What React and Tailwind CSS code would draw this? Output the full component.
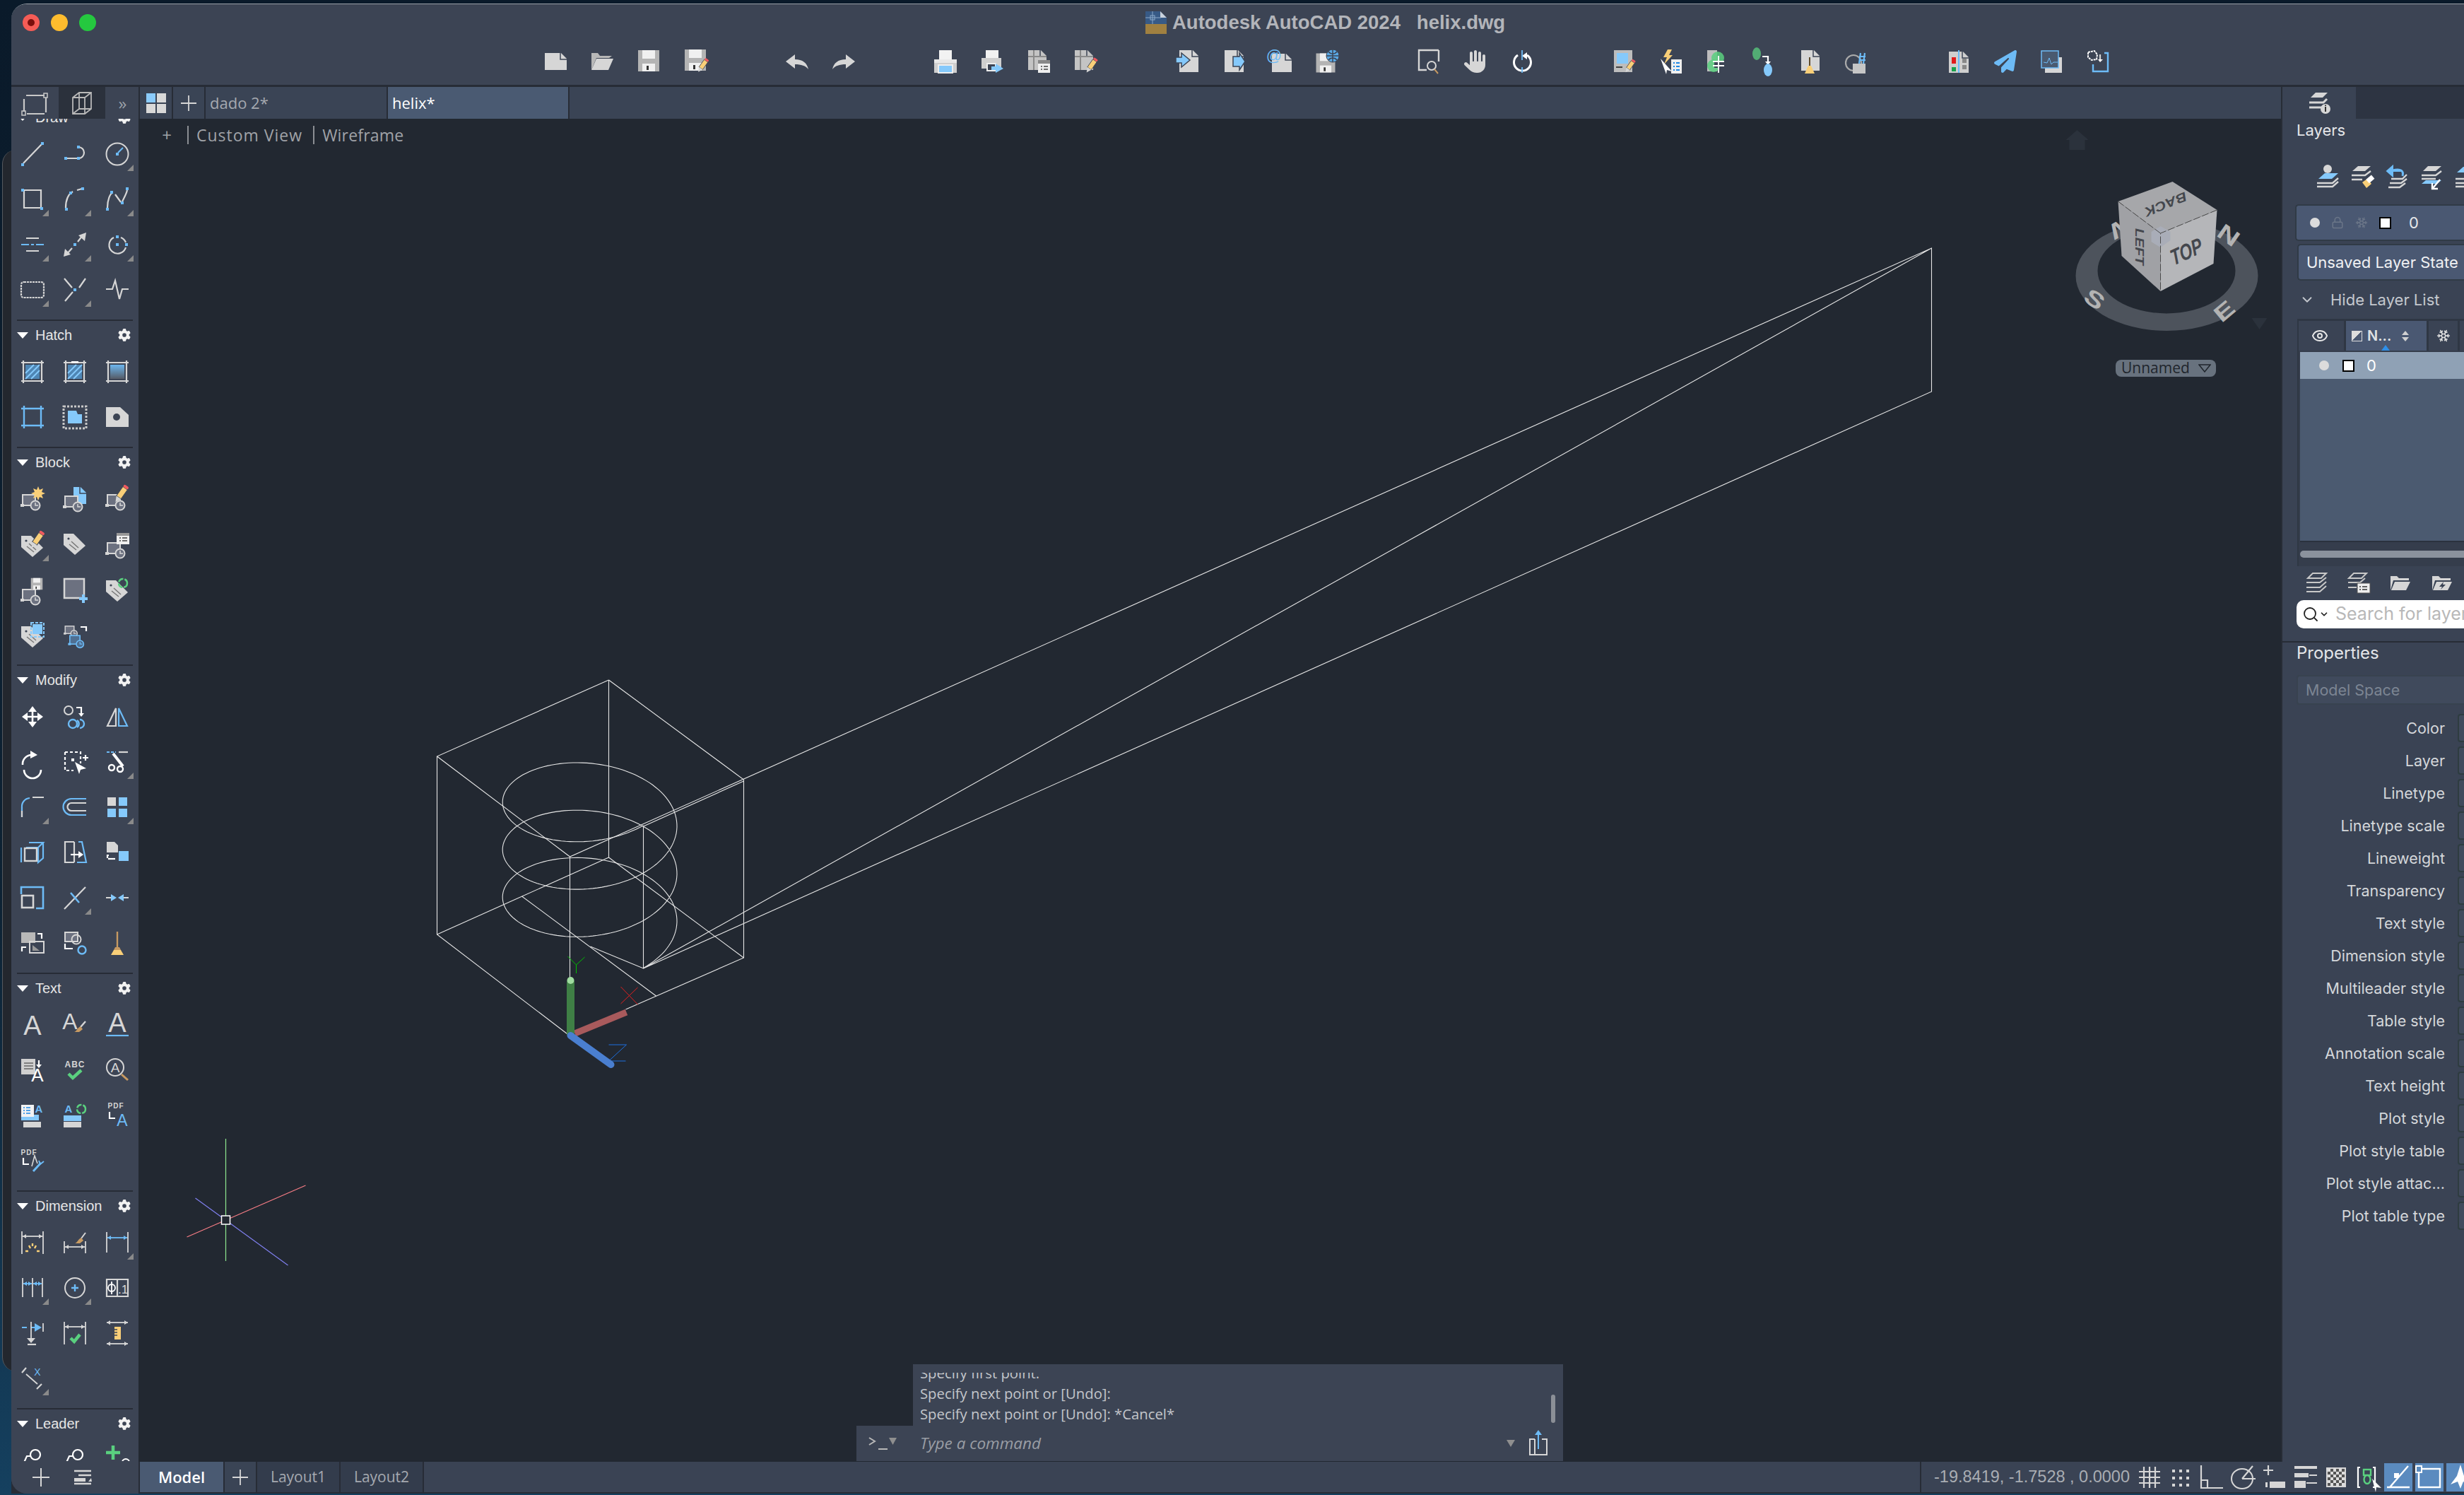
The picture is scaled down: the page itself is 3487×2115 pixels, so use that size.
import React from "react";
import { ChevronDown, Eye, Lock, Snowflake, Search } from "lucide-react";
import { FaGear, FaHand, FaPaperPlane } from "react-icons/fa6";

const G = "#d6d6d6";
const B = "#6dbbf6";
const L = "#85c9fb";
const Y = "#f9cf78";
const R = "#ef5a5f";
const W = "#ffffff";
const N = "#5ad07f";
const D = "#3c4454";
const T = "#c79a62";

const P = ({ d, c = G, w = 2.2, f = "none", ...r }) => (
  <path d={d} stroke={c} strokeWidth={w} fill={f} {...r} />
);
const Q = ({ x, y, s = 4, c = B }) => (
  <rect x={x - s / 2} y={y - s / 2} width={s} height={s} fill={c} />
);
const F = ({ d, c = G }) => <path d={d} fill={c} />;

const Doc = ({ x, y, w, h, c = G }) => (
  <g>
    <path d={`M${x},${y}H${x + w - 8}L${x + w},${y + 8}V${y + h}H${x}Z`} fill={c} />
    <path d={`M${x + w - 9},${y}V${y + 9}H${x + w}`} stroke={D} strokeWidth="1.5" fill="none" />
  </g>
);
const Floppy = ({ x = 0, y = 0, s = 1 }) => (
  <g transform={`translate(${x} ${y}) scale(${s})`}>
    <rect x="-15" y="-15" width="30" height="30" fill="#b4b4b4" />
    <rect x="-9" y="-15" width="18" height="12" fill="#f0f0f0" />
    <rect x="-9" y="4" width="18" height="11" fill="#f0f0f0" />
    <rect x="-3" y="7" width="3" height="6" fill="#333" />
  </g>
);
const Pencil = ({ x = 0, y = 0, s = 1 }) => (
  <g transform={`translate(${x} ${y}) rotate(35) scale(${s})`}>
    <rect x="-4" y="-9" width="8" height="16" fill={Y} stroke={D} strokeWidth="1" />
    <rect x="-4" y="-13" width="8" height="4" rx="2" fill={R} />
    <path d="M-4,7H4L0,15Z" fill={G} />
  </g>
);
const Blk = ({ x = 0, y = 0, s = 1, c = G, fill = "#6c7180" }) => (
  <g transform={`translate(${x} ${y}) scale(${s})`}>
    <rect x="-14" y="-6" width="18" height="15" fill={fill} stroke={c} strokeWidth="2" />
    <rect x="-17" y="7" width="5" height="4" fill={c} />
    <circle cx="4" cy="9" r="6.5" fill={fill} stroke={c} strokeWidth="2" />
    <path d="M4,5V9H8" stroke={c} strokeWidth="1.5" fill="none" />
  </g>
);
const Tag = ({ x = 0, y = 0, s = 1 }) => (
  <g transform={`translate(${x} ${y}) scale(${s})`}>
    <path d="M-16,-15H-2L15,2L0,15L-16,1Z" fill={G} />
    <circle cx="-9" cy="-8" r="1.6" fill={D} />
    <path d="M-5,-4L5,5M-8,0L2,8" stroke="#777" strokeWidth="1.5" />
  </g>
);
const HatchFrame = ({ c = G }) => <P c={c} d="M-16,-13H16M-16,13H16M-13,-16V16M13,-16V16" />;
const Hatches = () => (
  <g>
    <rect x="-10" y="-10" width="20" height="20" fill="#4f86b4" />
    <P c={L} w="2" d="M-10,2L2,-10M-10,10L10,-10M-2,10L10,-2" />
  </g>
);

const draw = [
  { i: <><P d="M-13,13L13,-14" /><Q x={-14} y={15} /><Q x={14} y={-15} /></> },
  { i: <><P d="M-13,6H5M5,-10A8,8 0 0 1 5,6" /><Q x={-13} y={6} /><Q x={5} y={6} /><Q x={5} y={-10} /></> },
  { i: <><circle r="15.5" fill="none" stroke={G} strokeWidth="2" /><Q x={0} y={0} /><P c={B} d="M1,-2L8,-9" /></>, f: 1 },
  { i: <><P d="M-12,-13H12V12H-12Z" /><Q x={-14} y={-13} /><Q x={13} y={13} /></>, f: 1 },
  { i: <><P d="M-13,12C-13,-2 -8,-8 -3,-11M3,-13L10,-15" /><Q x={-12} y={14} /><Q x={-6} y={-9} /><Q x={11} y={-15} /></>, f: 1 },
  { i: <><P d="M-14,12C-14,0 -10,-8 -7,-9M-3,-7L5,4M7,3C10,-3 13,-8 14,-13" /><Q x={-14} y={14} /><Q x={-8} y={-10} /><Q x={7} y={5} /><Q x={14} y={-15} /></>, f: 1 },
  { i: <><P d="M-9,-9H9M-9,9H9" /><P c={B} d="M-16,0H-5M-2,0H2M5,0H16" /></>, f: 1 },
  { i: <><P d="M-12,14L-4,5M4,-4L11,-13" /><F d="M-16,17L-14,6L-6,14Z" /><F d="M16,-17L14,-5L5,-13Z" /><Q x={0} y={0} /></>, f: 1 },
  { i: <><P d="M-5,-10A12,12 0 1 0 12,4M12,-3A12,12 0 0 0 5,-10" /><Q x={0} y={0} /><Q x={0} y={-11} /><Q x={13} y={0} /></>, f: 1 },
  { i: <><P strokeDasharray="3 1" d="M-12,-11H12Q16,-11 16,-7V7Q16,11 12,11H-12Q-16,11 -16,7V-7Q-16,-11 -12,-11Z" /></>, f: 1 },
  { i: <><P d="M-15,-16L-4,-3M15,-16L6,-3M-3,3L-14,16" /><Q x={0} y={0} /></>, f: 1 },
  { i: <><P d="M-16,-1H-7L-3,-13L3,13L7,-1H16" /></> },
];
const hatch = [
  { i: <><Hatches /><HatchFrame /></> },
  { i: <><Hatches /><HatchFrame /><rect x="-5" y="-15" width="10" height="3" fill={W} /></> },
  { i: <><rect x="-10" y="-10" width="20" height="20" fill="url(#gr)" /><HatchFrame /></> },
  { i: <><P c={B} w="2.4" d="M-16,-12H16M-16,12H16M-12,-16V16M12,-16V16" /></> },
  { i: <><rect x="-16" y="-15" width="32" height="31" fill="none" stroke="#c8c8c8" strokeWidth="3" strokeDasharray="3 2" /><path d="M-10,-9H2L4,-4H10V9H-10Z" fill={L} /></> },
  { i: <><path d="M-16,-14H4L16,-3V14H-16Z" fill={G} /><circle cx="-1" cy="0" r="5" fill={D} /></> },
];
const block = [
  { i: <><Blk /><path d="M8,-18L10,-13L15,-15L13,-10L18,-8L13,-6L15,-1L10,-3L8,2L6,-3L1,-1L3,-6L-2,-8L3,-10L1,-15L6,-13Z" fill={Y} /></> },
  { i: <><Doc x={-2} y={-17} w={18} h={24} c={L} /><Blk y={2} /></> },
  { i: <><Blk /><Pencil x={6} y={-8} /></> },
  { i: <><Tag y={3} /><Pencil x={7} y={-7} /></>, f: 1 },
  { i: <Tag /> },
  { i: <><Blk y={4} /><rect x="-1" y="-16" width="18" height="16" fill="#efefef" /><rect x="-1" y="-16" width="18" height="4" fill="#999" /><P c="#444" w="1.5" d="M3,-9H5M7,-9H14M3,-5H5M7,-5H14" /></> },
  { i: <><Blk y={6} /><Floppy x={6} y={-8} s={0.55} /></> },
  { i: <><rect x="-15" y="-15" width="28" height="27" fill="#6c7180" stroke={G} strokeWidth="2.5" /><P c={L} w="4" d="M6,13H18M12,7V19" /></> },
  { i: <><Tag y={2} /><circle cx="8" cy="-9" r="6" fill="none" stroke={N} strokeWidth="2.5" strokeDasharray="8 2" /></> },
  { i: <><Tag y={3} /><rect x="0" y="-15" width="14" height="14" fill={L} /><P c={L} w="2" d="M-2,-17H16V3H-2Z" strokeDasharray="4 2" /></> },
  { i: <><Blk x={-4} y={-8} s={0.7} /><P c={W} d="M8,-11H16V-5" /><Blk x={4} y={6} s={0.8} c={B} fill="#4f6f92" /></> },
  { i: null },
];
const modify = [
  { i: <><P c={W} w="2.6" d="M-13,0H13M0,-13V13" /><F c={W} d="M-15,0L-7,-6V6ZM15,0L7,-6V6ZM0,-15L-6,-7H6ZM0,15L-6,7H6Z" /></> },
  { i: <><circle cx="-9" cy="-9" r="6" fill="none" stroke={G} strokeWidth="2" /><P c={W} d="M2,-13H9V-3" /><F c={W} d="M5,-5H13L9,0Z" /><circle cx="-3" cy="10" r="6" fill="none" stroke={B} strokeWidth="2.4" /><path d="M7,4A6,6 0 0 1 7,16M3,5A6,6 0 0 1 3,15" fill="none" stroke={B} strokeWidth="2.4" /></> },
  { i: <><P d="M-2,-12V13H-14Z" /><P c={B} d="M2,-12V13H14Z" /></> },
  { i: <><P c={W} w="2.6" d="M-12,11A12,12 0 0 0 12,11M-14,4A13,13 0 0 1 -2,-10" /><F c={W} d="M-3,-16L7,-10L-3,-5Z" /></> },
  { i: <><P c={W} strokeDasharray="4 3" d="M-14,-14H8V2M-14,-14V12H-2" /><Q c={W} x={-3} y={-3} /><F c={W} d="M0,0L16,9L8,11L6,17Z" /><P c={W} d="M11,-6H19M15,-10V-2" /></> },
  { i: <><P c={B} d="M-15,-14H-2" strokeDasharray="4 2" /><P d="M2,-14H15" /><P c={W} w="4" d="M-6,-12L8,6" /><circle cx="-8" cy="8" r="4" fill="none" stroke={W} strokeWidth="2.4" /><circle cx="4" cy="10" r="4" fill="none" stroke={W} strokeWidth="2.4" /></>, f: 1 },
  { i: <><P c={B} d="M-15,14V0A12,12 0 0 1 -4,-13" /><P d="M0,-14H16M-15,5V14" /></>, f: 1 },
  { i: <><P c={B} d="M16,-12H-5A10,10 0 0 0 -5,11H16" /><P d="M16,-6H-5A5,5 0 0 0 -5,5H16" /></> },
  { i: <><rect x="-14" y="-14" width="12" height="12" fill={G} /><rect x="2" y="-14" width="12" height="12" fill={L} /><rect x="-14" y="2" width="12" height="12" fill={L} /><rect x="2" y="2" width="12" height="12" fill={L} /></>, f: 1 },
  { i: <><P c={B} d="M-16,-7V14M-5,-14H15L8,-7H-9M15,-14V8L8,14V-7" /><rect x="-11" y="-6" width="17" height="18" fill="none" stroke={G} strokeWidth="2.4" /></> },
  { i: <><P d="M-1,-15H-14V14H-1M-1,-15V14" /><P c={B} d="M5,-15H10L16,14H3" /><P c={W} d="M-6,3H8" /><F c={W} d="M5,-2L12,3L5,8Z" /></> },
  { i: <><path d="M-15,-15H-4L1,-10V0H-15Z" fill={G} /><P c={W} d="M-12,4H-14V8" /><P c={W} d="M-13,9H-3" /><rect x="2" y="-2" width="14" height="14" fill={L} /></> },
  { i: <><P c={B} w="2.6" d="M-16,-5V-15H15V15H5" /><rect x="-15" y="-3" width="16" height="17" fill="none" stroke={G} strokeWidth="2.6" /></> },
  { i: <><P d="M-15,16L15,-15" /><P c={B} w="2.6" d="M-6,-7L6,7" /></>, f: 1 },
  { i: <><P d="M-16,0H-9M9,0H16" /><F c={L} d="M-9,-5V5L-1,0Z" /><F c={L} d="M9,-5V5L1,0Z" /></> },
  { i: <><rect x="-16" y="-15" width="20" height="15" fill="#b8b8b8" /><rect x="-4" y="-2" width="20" height="16" fill="none" stroke={G} strokeWidth="2" /><path d="M0,11H10L0,3Z" fill="#999" /><P c={W} d="M7,-13H13V-6M-15,12V6H-9" /></> },
  { i: <><rect x="-14" y="-15" width="18" height="13" fill="#6c7180" stroke={G} strokeWidth="2" /><circle cx="2" cy="-5" r="6.5" fill="none" stroke={G} strokeWidth="2" /><P c={W} d="M-14,1V8H-3" /><circle cx="10" cy="10" r="5.5" fill="none" stroke={B} strokeWidth="2.4" /></> },
  { i: <><P c={T} w="2.4" d="M0,-16V6" /><F c={T} d="M-3,6H3L5,10H-5Z" /><F c={Y} d="M-5,10H5L9,17H-9Z" /></> },
];
const AText = ({ x = 0, y = 0, s = 36, c = G }) => (
  <text x={x} y={y} fontSize={s} textAnchor="middle" fontFamily="Liberation Sans, sans-serif" fill={c}>A</text>
);
const text = [
  { i: <AText y={14} s={38} /> },
  { i: <><AText x={-7} y={6} s={32} /><P c={G} w="2.4" d="M15,-5L8,3" /><F c={T} d="M8,2L11,6L6,10H-1C3,9 3,4 8,2Z" /></> },
  { i: <><AText y={10} s={38} /><P c={B} d="M-16,15H16" /></> },
  { i: <><rect x="-16" y="-16" width="20" height="22" fill="#d0d0d0" /><P c="#666" w="1.6" d="M-12,-10H1M-12,-6H1M-12,-2H1" /><P c={W} d="M9,-14V-7" /><F c={W} d="M5,-8H13L9,-3Z" /><AText c={W} x={7} y={16} s={26} /></> },
  { i: <><text y="-4" textAnchor="middle" fontSize="12" fontWeight="700" fontFamily="Liberation Sans, sans-serif" letterSpacing="1" fill={G}>ABC</text><P c={N} w="4.5" d="M-9,5L-3,11L9,0" /></> },
  { i: <><circle cx="-3" cy="-4" r="12" fill="none" stroke={G} strokeWidth="2" /><AText x={-3} y={3} s={19} /><P c={T} w="3" d="M6,6L15,14" /></> },
  { i: <><rect x="-16" y="-1" width="25" height="8" fill={L} /><rect x="-13" y="9" width="25" height="8" fill={G} /><rect x="-16" y="-15" width="18" height="17" fill="#f2f2f2" /><P c="#1e88e5" w="1.6" d="M-13,-11H-11M-9,-11H-3M-13,-7H-11M-9,-7H-3M-13,-3H-11M-9,-3H-3" /><text x="9" y="-4" fontSize="15" fontWeight="700" textAnchor="middle" fontFamily="Liberation Sans, sans-serif" fill={B}>A</text></> },
  { i: <><rect x="-16" y="0" width="25" height="8" fill={L} /><rect x="-16" y="9" width="25" height="8" fill={G} /><text x="-9" y="-4" fontSize="15" fontWeight="700" textAnchor="middle" fontFamily="Liberation Sans, sans-serif" fill={B}>A</text><circle cx="9" cy="-9" r="6" fill="none" stroke={N} strokeWidth="2.5" strokeDasharray="8 2" /></> },
  { i: <><text x="-2" y="-10" fontSize="10" fontWeight="700" textAnchor="middle" fontFamily="Liberation Sans, sans-serif" letterSpacing="1" fill={G}>PDF</text><P c={W} d="M-11,-5V4H-3" /><AText c={B} x={7} y={15} s={23} /></> },
  { i: <><text x="-5" y="-8" fontSize="10" fontWeight="700" textAnchor="middle" fontFamily="Liberation Sans, sans-serif" letterSpacing="1" fill={G}>PDF</text><P c={W} d="M-13,-4V5H-5" /><P c={G} w="1.6" d="M-1,8L3,-7L7,4" /><P c={B} w="3" d="M1,15L12,3" /><P c={B} w="2" d="M9,0L11,5L16,1" /></> },
  { i: null },
  { i: null },
];
const dimArrow = (y, x1, x2, c = G) => (
  <><P c={c} w="1.8" d={`M${x1},${y}H${x2}`} /><F c={c} d={`M${x1},${y}l5,-3v6ZM${x2},${y}l-5,-3v6Z`} /></>
);
const dim = [
  { i: <><P d="M-15,-16V16M15,-16V16" w="1.8" />{dimArrow(-9, -14, 14)}<P c={Y} w="2.4" d="M-5,4L-3,8M5,4L3,8M0,1V5M-10,12H-6M10,12H6" /></> },
  { i: <><P w="1.8" d="M-15,-2V15M15,-2V15" />{dimArrow(6, -14, 14)}<P w="2" d="M15,-14L9,-6" /><F c={T} d="M9,-7L12,-3L7,1H0C4,0 4,-5 9,-7Z" /></> },
  { i: <><P w="1.8" d="M-15,-15V14M15,-15V14" />{dimArrow(-7, -14, 14, B)}</>, f: 1 },
  { i: <><P w="1.8" d="M-14,-14V13M0,-14V13M14,-14V13" />{dimArrow(-6, -13, -1, B)}{dimArrow(-6, 1, 13, B)}</>, f: 1 },
  { i: <><circle r="14" fill="none" stroke={G} strokeWidth="2" /><P c={B} w="2.4" d="M-5,0H5M0,-5V5" /></>, f: 1 },
  { i: <><P d="M-15,-12H15V12H-15ZM0,-12V12" /><circle cx="-8" r="5" fill="none" stroke={W} strokeWidth="1.8" /><P c={W} w="1.8" d="M-8,-9V9" /><text x="8" y="8" fontSize="17" textAnchor="middle" fontFamily="Liberation Sans, sans-serif" fill={G}>.1</text></> },
  { i: <><P c={B} d="M-15,-8H-8M3,-8H-2" /><F c={B} d="M3,-14L13,-8L3,-2Z" /><P d="M-2,-16V7M15,-14V-2" w="1.8" /><F d="M-8,7H4L-2,14Z" /><P d="M-7,16H5" /></> },
  { i: <><P w="1.8" d="M-15,-16V16M15,-16V16" />{dimArrow(-9, -14, 14)}<P c={N} w="4.5" d="M-6,7L-1,12L7,2" /></> },
  { i: <>{dimArrow(-15, -15, 15)}{dimArrow(15, -15, 15)}<rect x="-4" y="-9" width="9" height="18" fill={Y} /><P c={D} w="1.4" d="M-4,-5H0M-4,-1H0M-4,3H0" /></> },
  { i: <><P d="M-15,-8L-9,-15M6,15L13,8" /><P w="1.8" d="M-9,-6L7,8" /><text x="7" y="-4" fontSize="14" fontFamily="Liberation Sans, sans-serif" textAnchor="middle" fill={B}>X</text></>, f: 1 },
  { i: null },
  { i: null },
];
const leader = [
  { i: <g transform="translate(0 -7)"><P c={W} d="M-12,10L-8,1H-2" /><circle cx="4" cy="-1" r="7" fill="none" stroke={W} strokeWidth="2.2" /></g> },
  { i: <g transform="translate(0 -7)"><P c={W} d="M-12,10L-8,1H-2" /><circle cx="4" cy="-1" r="7" fill="none" stroke={W} strokeWidth="2.2" /></g> },
  { i: <g transform="translate(0 -9)"><P c={N} w="4.5" d="M-6,-12V8M-16,-2H4" /><circle cx="12" cy="12" r="5" fill="none" stroke={W} strokeWidth="2" /><circle cx="0" cy="14" r="3" fill="none" stroke={W} strokeWidth="2" /></g> },
];

const sections = [
  { title: "Draw", icons: draw },
  { title: "Hatch", icons: hatch },
  { title: "Block", icons: block },
  { title: "Modify", icons: modify },
  { title: "Text", icons: text },
  { title: "Dimension", icons: dim },
  { title: "Leader", icons: leader },
];

const topIcons = [
  [
    <Doc x={-15} y={-12} w={31} h={24} />,
    <><path d="M-15,-12H-6L-3,-8H14L10,-5H-8L-15,12Z" fill="#b8b8b8" /><path d="M-8,-4H16L9,12H-15Z" fill={G} /></>,
    <Floppy y={-1} />,
    <><Floppy y={-2} /><Pencil x={11} y={5} s={0.8} /></>,
  ],
  [
    <path d="M-16,0L-3,-10V-3C8,-3 14,2 16,11C12,6 6,4 -3,4V10Z" fill={G} />,
    <path d="M16,0L3,-10V-3C-8,-3 -14,2 -16,11C-12,6 -6,4 3,4V10Z" fill={G} />,
  ],
  [
    <><rect x="-9" y="-16" width="18" height="13" fill="#f2f2f2" /><rect x="-16" y="-3" width="32" height="19" fill="#cfcfcf" /><rect x="-16" y="-3" width="32" height="5" fill="#e8e8e8" /><rect x="-10" y="5" width="20" height="11" fill={L} stroke="#eee" strokeWidth="2" /></>,
    <><rect x="-9" y="-16" width="18" height="11" fill="#f2f2f2" /><rect x="-15" y="-5" width="28" height="15" fill="#cfcfcf" /><rect x="-7" y="3" width="12" height="10" fill={D} stroke="#eee" strokeWidth="2" /><path d="M5,3L16,10L5,16V12H-1V7H5Z" fill={L} /></>,
    <><Doc x={-15} y={-16} w={26} h={28} c="#c4c4c4" /><P c="#8a8a8a" w="2" d="M-15,-7H11M-7,-16V12" /><rect x="-1" y="-2" width="17" height="18" fill="#efefef" /><rect x="-1" y="-2" width="17" height="5" fill="#888" /><P c="#444" w="1.6" d="M3,7H5M7,7H13M3,11H5M7,11H13" /></>,
    <><Doc x={-15} y={-16} w={26} h={28} c="#c4c4c4" /><P c="#8a8a8a" w="2" d="M-15,-7H11M-7,-16V12" /><Pencil x={9} y={5} s={0.85} /></>,
  ],
  [
    <><Doc x={-11} y={-16} w={27} h={31} /><path d="M-16,-6H-8V-12L4,-2L-8,8V2H-16Z" fill={L} stroke={D} strokeWidth="1.5" /></>,
    <><Doc x={-13} y={-16} w={27} h={31} /><path d="M-1,-7H8V-12L16,0L8,12V7H-1Z" fill={L} stroke={D} strokeWidth="1.5" /></>,
    <><Doc x={-12} y={-11} w={28} h={26} /><text x={-9} y={-1} fontSize="22" textAnchor="middle" fontFamily="Liberation Sans, sans-serif" fill={B}>@</text></>,
    <><Floppy x={-2} y={2} s={0.9} /><circle cx="8" cy="-8" r="9" fill="#5aa8e4" stroke={D} /><P c={D} w="1.5" d="M-1,-8H17M8,-17V1M2,-14C5,-10 11,-10 14,-14M2,-2C5,-6 11,-6 14,-2" /></>,
  ],
  [
    <><P w="2.4" d="M14,-16H-14V12H-3M14,-16V0" /><circle cx="4" cy="6" r="6" fill="none" stroke={G} strokeWidth="2" /><P c={T} w="2" d="M8,11L13,17" /></>,
    <FaHand x={-16} y={-16} size={32} color={G} />,
    <><P c={W} w="3" d="M-6,-9A12,12 0 1 0 7,-9" /><F c={W} d="M7,-13V-3L0,-8Z" /><P c={B} w="1.8" d="M0,-16V-2M0,8V16" /></>,
  ],
  [
    <><rect x="-14" y="-16" width="26" height="31" fill="#bdbdbd" /><rect x="-10" y="-12" width="16" height="15" fill={L} /><P c="#444" d="M-11,8H-2" /><Pencil x={9} y={6} s={0.75} /></>,
    <><path d="M-4,-17L-10,-6H-5L-9,4L3,-9H-2L2,-17Z" fill={Y} /><path d="M-14,-4L2,14L-5,12L-6,18Z" fill={W} /><rect x="1" y="-3" width="15" height="20" fill="#efefef" /><P c="#1e88e5" w="2" d="M4,2H6M8,2H13M4,7H6M8,7H13M4,12H6M8,12H13" /></>,
    <><rect x="-14" y="-16" width="14" height="30" fill="#bdbdbd" /><circle cx="1" cy="-5" r="9" fill={N} opacity=".85" /><circle cx="-5" cy="6" r="9" fill={N} opacity=".85" /><rect x="-4" y="-1" width="12" height="10" fill={D} /><P c={W} d="M2,-8V16M-6,0H10M-6,6H10" w="1.8" /></>,
    <><ellipse cx="-10" cy="-11" rx="6" ry="9" fill={N} opacity=".75" /><P c={W} d="M-2,-7H6V1" /><F c={W} d="M2,0H10L6,5Z" /><ellipse cx="6" cy="12" rx="6" ry="9" fill={L} /></>,
    <><Doc x={-13} y={-16} w={26} h={29} /><P c="#5c4a2c" w="2" d="M-1,-6V6" /><F c={Y} d="M-3,6H1L6,17H-8Z" /></>,
    <><circle cx="-5" cy="2" r="11" fill="none" stroke="#aaa" strokeWidth="2.2" /><rect x="-6" y="3" width="18" height="14" fill="#c6c6c6" /><P c={B} d="M3,-7H12M3,-2H12M5,-12L3,3M11,-12L9,3" /></>,
  ],
  [
    <><Doc x={-14} y={-14} w={28} h={30} c="#cfcfcf" /><rect x="-10" y="-6" width="6" height="9" fill="#e21b1b" /><rect x="-10" y="8" width="6" height="6" fill="#17a24c" /><P c={B} w="2" d="M0,-16V16" /><rect x="5" y="-4" width="6" height="6" fill="#888" /><rect x="5" y="5" width="6" height="6" fill="#888" /></>,
    <FaPaperPlane x={-16} y={-16} size={32} color={B} />,
    <><rect x="-10" y="-6" width="24" height="22" fill={G} /><rect x="-15" y="-15" width="24" height="24" fill="#4a5a70" stroke={B} strokeWidth="1.5" /><P c={B} w="1" d="M-12,1L-7,2L-4,-5L-1,4L2,1L8,1" /></>,
    <><P c={W} w="2" strokeDasharray="3 1" d="M-15,-13L-6,-15L-2,-10L-3,-3L-10,-2L-15,-6Z" /><P c={G} d="M2,-10V-2" /><F c={W} d="M-1,-3H6L2,1Z" /><P c={B} w="2.4" d="M8,-12H13V14H-8V4" /></>,
  ],
];

const statusIcons = [
  <P c={G} d="M-8,-15V15M0,-15V15M8,-15V15M-15,-8H15M-15,0H15M-15,8H15" />,
  <><path fill={G} d="M-12,-11h4v4h-4zM-2,-11h4v4h-4zM8,-11h4v4h-4zM-12,-1h4v4h-4zM-2,-1h4v4h-4zM8,-1h4v4h-4zM-12,9h4v4h-4zM-2,9h4v4h-4zM8,9h4v4h-4z" /></>,
  <P c={G} d="M-15,-17V15H16M-15,4H-6V15" />,
  <><ellipse cx="-1" cy="2" rx="15" ry="14" fill="none" stroke={G} strokeWidth="2" /><P c={G} d="M-1,2L14,-16M-1,2H18" /></>,
  <><P c={G} d="M-15,-10H-1M-8,-17V-3" /><rect x="-6" y="6" width="22" height="9" fill={G} /><rect x="-12" y="7" width="3" height="7" fill={G} /></>,
  <><rect x="-15" y="-16" width="32" height="4" fill={G} /><rect x="-15" y="-6" width="20" height="6" fill={G} /><rect x="6" y="-4" width="11" height="2" fill={G} /><rect x="-15" y="5" width="16" height="10" fill={G} /><rect x="2" y="7" width="15" height="2" fill={G} /></>,
  <><rect x="-13" y="-13" width="26" height="26" fill="url(#chk)" stroke={G} strokeWidth="2" /></>,
  <><P c={W} d="M-10,-14H-13V14H-10M8,-14H11V14H8" /><rect x="-5" y="-11" width="10" height="8" fill="none" stroke={N} strokeWidth="2.4" /><ellipse cx="0" cy="3" rx="4.5" ry="6" fill="none" stroke={N} strokeWidth="2.4" /><path d="M7,2L20,15L13,14L12,21Z" fill={W} /></>,
  <><P c={W} w="2.4" d="M-16,14H16M-12,14L14,-16" /><rect x="-6" y="-6" width="7" height="7" fill={W} /></>,
  <><rect x="-15" y="-12" width="30" height="26" fill="none" stroke={W} strokeWidth="2.4" /><rect x="-19" y="-16" width="8" height="9" fill="#5b8bbf" stroke={W} strokeWidth="2" /></>,
  <path d="M0,-18L5,-2L14,10L4,6L0,16L-4,6L-14,10L-5,-2Z" fill={W} />,
];

const helixPath = () => {
  const pts = [];
  const start = -2 * Math.PI + 0.9077;
  const end = 4 * Math.PI + 0.9077;
  for (let i = 0; i <= 360; i++) {
    const a = start + ((end - start) * i) / 360;
    const zx = 767.5 + 345.5 * Math.cos(a);
    const zy = 628.5 + (170 * a) / (2 * Math.PI) + 182 * Math.sin(a);
    pts.push(`${(560 + zx / 2.8).toFixed(1)},${(920 + zy / 2.529).toFixed(1)}`);
  }
  return "M" + pts.join("L");
};

const Drawing = () => (
  <svg viewBox="196 168 3031 1900" className="absolute inset-0 w-full h-full">
    <g stroke="#e6e6e6" strokeWidth="1.1" fill="none">
      <path d="M861,962L618,1070L806,1212L2733,351V554L910,1370L2733,351" />
      <path d="M861,962L1052,1103V1355L885,1428M861,962V1213M618,1070V1322L804,1464" />
      <path d="M806,1212V1385M861,1213L618,1322M861,1213L1052,1355" />
      <path d="M910,1169L1052,1105M910,1169V1370L835,1339" />
      <path d="M738,1268L928,1409" />
      <path d={helixPath()} />
    </g>
    <g stroke="#00c000" strokeWidth="1" fill="none"><path d="M803,1353L815,1365L827,1354M815,1365V1377" /></g>
    <g stroke="#e02020" strokeWidth="1" fill="none"><path d="M878,1396L902,1421M902,1397L878,1420" /></g>
    <g stroke="#1c6fe0" strokeWidth="1" fill="none"><path d="M861,1478H886L861,1501H885" /></g>
    <path d="M813,1462L886,1432" stroke="#a85a5c" strokeWidth="9" />
    <path d="M807,1390V1462" stroke="#3f7f45" strokeWidth="11" strokeLinecap="round" />
    <circle cx="807" cy="1387" r="5" fill="#9fdc9f" />
    <path d="M807,1465L864,1506" stroke="#4a7fd0" strokeWidth="10" strokeLinecap="round" />
    <path d="M319,1611V1784" stroke="#8fe98f" strokeWidth="1.2" />
    <path d="M264,1750L432,1677" stroke="#f77d85" strokeWidth="1.2" />
    <path d="M276,1695L407,1790" stroke="#8080f0" strokeWidth="1.2" />
    <rect x="313" y="1720" width="12" height="12" fill="#222831" stroke="#fff" strokeWidth="1.5" />

    <path d="M2923,198L2939,184L2955,198H2950V212H2928V198Z" fill="#2b323c" />
    <path d="M3186,450H3208L3197,466Z" fill="#2b323c" />
    <path
      fillRule="evenodd"
      fill="#4d535c"
      d="M2937,390A129,78 0 1 0 3195,390A129,78 0 1 0 2937,390ZM2968,383A97,60 0 1 1 3163,383A97,60 0 1 1 2968,383Z"
    />
    <g fill="#b3b3b3" fontFamily="Liberation Sans, sans-serif" fontWeight="700" fontSize="42">
      <text transform="translate(2964 423) rotate(35) scale(1 .75)" textAnchor="middle" y="15">S</text>
      <text transform="translate(3147 440) rotate(-40) scale(1 .75)" textAnchor="middle" y="15">E</text>
      <text transform="translate(3153 333) rotate(215) scale(1 .75)" textAnchor="middle" y="15">N</text>
      <text transform="translate(3004 321) rotate(150) scale(1 .75)" textAnchor="middle" y="15">W</text>
    </g>
    <path d="M3074,257L3137,297L3057,330L2997,285Z" fill="#a6a7aa" />
    <path d="M2997,285L3057,330V412L3002,362Z" fill="#a0a1a5" />
    <path d="M3137,297L3057,330V412L3132,373Z" fill="#b5b6b9" />
    <path d="M3057,320L3071,328V340L3057,350L3044,342V328Z" fill="#a9adb8" />
    <path d="M3137,297L3057,330V412M2997,285L3057,330" stroke="#4a4a4a" strokeWidth="1" strokeDasharray="10 3" fill="none" />
    <g fill="#44474d" fontFamily="Liberation Sans, sans-serif" fontWeight="700" fontStyle="italic" textAnchor="middle">
      <text transform="translate(3062 283) rotate(158) scale(.95 .8)" fontSize="23">BACK</text>
      <text transform="translate(3021 349) rotate(90) scale(1.1 .85)" fontSize="19">LEFT</text>
      <text transform="translate(3097 366) rotate(-25) skewX(-6) scale(.75 1)" fontSize="31">TOP</text>
    </g>
  </svg>
);

const Section = ({ title, icons, first }) => (
  <div className="flex flex-col">
    <div className={first ? "h-[2px]" : "h-[2px] mx-2 bg-[#272c36]"} />
    <div className="h-[40px] flex items-center pl-2 pr-[11px]">
      <span className="w-0 h-0 border-x-[8px] border-x-transparent border-t-[9px] border-t-white" />
      <span className="ml-[10px] flex-1 text-[20px] text-[#e6e6e6] font-['Liberation_Sans',sans-serif]">{title}</span>
      <FaGear size={18} color="#f2f2f2" />
    </div>
    <div className="grid grid-cols-3 pb-[10px]">
      {icons.map((ic, n) => (
        <div key={n} className="h-[64px] flex items-center justify-center">
          {ic.i && (
            <svg viewBox="-28 -28 56 56" width="56" height="56">
              {ic.i}
              {ic.f && <path d="M14,24H23V15Z" fill="#8a8a8a" />}
            </svg>
          )}
        </div>
      ))}
    </div>
  </div>
);

const Palette = () => (
  <div className="w-[180px] shrink-0 flex flex-col bg-[#3c4454] rounded-bl-[22px] overflow-hidden">
    <div className="h-[45px] shrink-0 flex gap-[2px]">
      <div className="w-[65px] flex items-center justify-center">
        <svg viewBox="-28 -28 56 56" width="56" height="56">
          <P c="#c8c8c8" d="M-12,-11H14M-15,-6V12M-11,15H14M16,-8V13" />
          <rect x="13" y="-14" width="5" height="6" fill="none" stroke="#c8c8c8" strokeWidth="1.5" />
          <rect x="-18" y="11" width="5" height="6" fill="none" stroke="#c8c8c8" strokeWidth="1.5" />
        </svg>
      </div>
      <div className="w-[66px] bg-[#2b313c] flex items-center justify-center">
        <svg viewBox="-28 -28 56 56" width="56" height="56">
          <P c="#b8b8b8" w="1.8" d="M-13,-8L-4,-15H13V8L4,15H-13ZM-13,-8H4V15M4,-8L13,-15M-4,-15V8H13M-4,8L-13,15" />
        </svg>
      </div>
      <div className="flex-1 flex items-center justify-center text-[24px] text-[#9aa0a8] font-['Open_Sans',sans-serif]">»</div>
    </div>
    <div className="flex-1 min-h-0 overflow-hidden">
      <div className="-mt-[24px] flex flex-col">
        {sections.map((s, i) => (
          <Section key={s.title} title={s.title} icons={s.icons} first={i === 0} />
        ))}
      </div>
    </div>
    <div className="h-[46px] shrink-0 flex items-center pl-[28px] bg-[#3c4454]">
      <svg viewBox="-14 -14 28 28" width="28" height="28"><P c={G} w="2" d="M-12,0H12M0,-13V13" /></svg>
      <svg viewBox="-14 -14 28 28" width="28" height="28" className="ml-[31px]">
        <P c={G} w="2.4" d="M-12,-9H12M-6,-3H12M-12,9H12" />
        <rect x="-12" y="1" width="16" height="5" fill={G} />
        <path d="M8,6L12,1L13,6Z" fill={G} />
      </svg>
    </div>
  </div>
);

const tabFont = "font-['Open_Sans',sans-serif]";

const DocTabs = () => (
  <div className="h-[45px] shrink-0 flex gap-[2px] pl-[2px] bg-[#272c36]">
    <div className="w-[45px] bg-[#3a4455] flex items-center justify-center">
      <div className="grid grid-cols-2 gap-[2px]">
        <div className="w-[13px] h-[13px] bg-[#8acbfb]" />
        <div className="w-[13px] h-[13px] bg-[#d8d8d8]" />
        <div className="w-[13px] h-[13px] bg-[#d8d8d8]" />
        <div className="w-[13px] h-[13px] bg-[#d8d8d8]" />
      </div>
    </div>
    <div className="w-[44px] bg-[#3a4455] flex items-center justify-center">
      <svg viewBox="-12 -12 24 24" width="24" height="24"><P c={G} w="1.8" d="M-11,0H11M0,-11V11" /></svg>
    </div>
    <div className={`w-[256px] bg-[#3a4455] pl-[6px] flex items-center text-[22px] text-[#a5a9b0] ${tabFont}`}>dado 2*</div>
    <div className={`w-[255px] bg-[#4a5a72] pl-[6px] flex items-center text-[22px] text-white ${tabFont}`}>helix*</div>
    <div className="flex-1 bg-[#3a4455]" />
  </div>
);

const CommandLine = () => (
  <div className={`absolute left-[1016px] bottom-[1px] w-[1000px] ${tabFont} text-[20.3px]`}>
    <div className="ml-[80px] h-[87px] bg-[#3c4454] relative overflow-hidden pl-[10px] text-[#c3c6cb] leading-[29px]">
      <div className="mt-[12px] h-[75px] overflow-hidden">
        <div className="-mt-[14px]">
          <div>Specify first point:</div>
          <div>Specify next point or [Undo]:</div>
          <div>Specify next point or [Undo]: *Cancel*</div>
        </div>
      </div>
      <div className="absolute right-[11px] top-[43px] w-[6px] h-[40px] rounded-full bg-[#8b8f96]" />
    </div>
    <div className="h-[50px] bg-[#3c4454] flex items-center">
      <div className="w-[80px] flex items-center pl-[16px]">
        <svg viewBox="0 0 42 28" width="42" height="28">
          <P c="#b8b8b8" w="2" d="M2,6L10,11L2,16M15,22H28" />
          <path d="M30,6H41L35.5,16Z" fill="#8f8f8f" />
        </svg>
      </div>
      <span className="ml-[10px] italic text-[22.5px] text-[#9a9ea5] flex-1">Type a command</span>
      <div className="w-0 h-0 border-x-[6px] border-x-transparent border-t-[10px] border-t-[#8f8f8f] mr-[19px]" />
      <svg viewBox="0 0 28 40" width="28" height="40" className="mr-[21px]">
        <P c={G} w="2" d="M9,14H2V36H26V14H19M9,14V36" />
        <P c={B} w="2" d="M14,28V6" />
        <path d="M14,1L19,8H9Z" fill={B} />
      </svg>
    </div>
  </div>
);

const Canvas = () => (
  <div className="relative flex-1 bg-[#222831] overflow-hidden">
    <Drawing />
    <div className={`absolute left-[32px] top-[9px] h-[28px] flex items-center text-[23px] text-[#a0a3a8] ${tabFont}`}>
      <span className="w-[16px] text-center text-[24px]">+</span>
      <span className="ml-[21px] w-[2px] h-[26px] bg-[#8b8e93]" />
      <span className="ml-[11px] tracking-[1px]">Custom View</span>
      <span className="ml-[15px] w-[2px] h-[26px] bg-[#8b8e93]" />
      <span className="ml-[11px] tracking-[0.2px]">Wireframe</span>
    </div>
    <div className="absolute left-[2798px] top-[341px] w-[142px] h-[24px] rounded-[8px] bg-[#68727e] flex items-center pl-[8px] text-[21px] text-[#1f252c] font-['Open_Sans',sans-serif]">
      Unnamed
      <svg viewBox="0 0 18 12" width="18" height="12" className="ml-[12px]">
        <path d="M1,1H17L9,11Z" fill="none" stroke="#1f252c" strokeWidth="1.5" />
      </svg>
    </div>
    <CommandLine />
  </div>
);

const Dot = ({ c = "#d8d8d8" }) => <span className="block w-[14px] h-[14px] rounded-full" style={{ background: c }} />;
const Sq = () => <span className="block w-[17px] h-[17px] bg-white border-[2px] border-black" />;

const layerIcon = (a) => (
  <svg viewBox="-20 -20 40 40" width="40" height="40" className="shrink-0">
    <path d="M-13,-6L-4,-14H14L5,-6Z" fill={a ? L : G} />
    <path d="M-15,3H7L15,-5M-15,9H7L15,1M-15,14H7L15,7" fill="none" stroke={G} strokeWidth="2.4" />
  </svg>
);

const props = [
  "Color", "Layer", "Linetype", "Linetype scale", "Lineweight", "Transparency", "Text style", "Dimension style",
  "Multileader style", "Table style", "Annotation scale", "Text height", "Plot style", "Plot style table",
  "Plot style attac...", "Plot table type",
];

const RightPanel = () => (
  <div className="w-[259px] shrink-0 border-l-[2px] border-[#272c36] bg-[#3a4354] flex flex-col overflow-hidden font-['Inter',sans-serif]">
    <div className="h-[45px] shrink-0 flex bg-[#2d3442]">
      <div className="w-[104px] bg-[#3a4354] flex items-center justify-center">
        <svg viewBox="-20 -20 40 40" width="40" height="40">
          <path d="M-12,-8L-5,-15H12L5,-8Z" fill={G} />
          <path d="M-14,-1H6L11,-6M-14,6H4" fill="none" stroke={G} strokeWidth="3" />
          <circle cx="9" cy="8" r="7" fill={G} />
          <path d="M9,5V12M9,2.5V4" stroke="#333" strokeWidth="2" />
        </svg>
      </div>
    </div>
    <div className="h-[32px] shrink-0 pl-[20px] flex items-center text-[22px] text-[#e4e6e9]">Layers</div>
    <div className="h-[89px] shrink-0 flex items-start pt-[30px] pl-[44px] gap-[9px]">
      <svg viewBox="-20 -20 40 40" width="40" height="40" className="shrink-0">
        <circle cx="0" cy="-11" r="6" fill={G} />
        <path d="M-13,3L-4,-5H15L6,3Z" fill={L} />
        <path d="M-15,9H7L15,2M-15,14H7L15,7" fill="none" stroke={G} strokeWidth="2.4" />
      </svg>
      <svg viewBox="-20 -20 40 40" width="40" height="40" className="shrink-0">
        <path d="M-14,-8L-6,-15H12L4,-8Z" fill={G} />
        <path d="M-15,-2H4L12,-8M-15,4H0" fill="none" stroke={G} strokeWidth="2.4" />
        <path d="M6,16L0,8L7,3L13,10Z" fill={Y} />
        <rect x="6" y="0" width="10" height="7" fill={W} transform="rotate(-40 11 3)" />
      </svg>
      <svg viewBox="-20 -20 40 40" width="40" height="40" className="shrink-0">
        <path d="M-14,-8H6M-14,-8L-6,-15L-6,-1Z" fill={B} stroke={B} strokeWidth="2" />
        <path d="M-6,-9C6,-12 10,-8 8,-1" fill="none" stroke={B} strokeWidth="3" />
        <path d="M-8,3H8L14,-3M-10,9H6L14,3M-12,15H4L12,9" fill="none" stroke={G} strokeWidth="2.4" />
      </svg>
      <svg viewBox="-20 -20 40 40" width="40" height="40" className="shrink-0">
        <path d="M-12,-8L-5,-15H14L6,-8Z" fill={G} />
        <path d="M-14,-2H6L14,-8M-14,3H6" fill="none" stroke={G} strokeWidth="2.4" />
        <path d="M-14,10L-8,5H14L8,10Z" fill={L} />
        <path d="M12,4L2,16M1,9V17H9" fill="none" stroke={W} strokeWidth="2.4" />
      </svg>
      {layerIcon(true)}
    </div>
    <div className="h-[52px] shrink-0 ml-[18px] bg-[#4a5872] border-[2px] border-r-0 border-[#303a46] rounded-l-[5px] flex items-center pl-[19px] text-[22px] text-[#e6e8ea]">
      <Dot c="#dcdcdc" />
      <Lock size={18} color="#6b7688" className="ml-[16px]" />
      <Snowflake size={18} color="#6b7688" className="ml-[16px]" />
      <span className="ml-[16px]"><Sq /></span>
      <span className="ml-[25px]">0</span>
    </div>
    <div className="h-[52px] shrink-0 mt-[4px] ml-[21px] bg-[#4a5872] border-[2px] border-r-0 border-[#303a46] rounded-l-[5px] flex items-center pl-[11px] text-[22px] text-[#f0f1f3] whitespace-nowrap">
      Unsaved Layer State
    </div>
    <div className="h-[54px] shrink-0 ml-[24px] flex items-center text-[22px] text-[#c4c8ce] whitespace-nowrap">
      <ChevronDown size={22} color="#c4c8ce" />
      <span className="ml-[22px]">Hide Layer List</span>
    </div>
    <div className="h-[350px] shrink-0 ml-[21px] bg-[#353d4c] border-l-[2px] border-[#2f3744] flex flex-col">
      <div className="h-[45px] shrink-0 flex gap-[3px] pt-[3px] bg-[#2f3744]">
        <div className="w-[64px] pr-[5px] bg-[#3a4354] flex items-center justify-center"><Eye size={24} color="#e8e8e8" /></div>
        <div className="w-[114px] relative bg-[#4a5872] flex items-center pl-[8px] gap-[7px]">
          <span className="w-[15px] h-[15px] bg-[linear-gradient(135deg,#ddd_50%,#4a5872_50%)] border border-[#ddd]" />
          <span className="text-[20px] font-semibold text-[#dfe1e4]">N...</span>
          <span className="ml-[8px] flex flex-col gap-[3px]">
            <span className="w-0 h-0 border-x-[5px] border-x-transparent border-b-[6px] border-b-[#d0d0d0]" />
            <span className="w-0 h-0 border-x-[5px] border-x-transparent border-t-[6px] border-t-[#d0d0d0]" />
          </span>
          <span className="absolute left-[50px] bottom-0 w-0 h-0 border-x-[6px] border-x-transparent border-b-[8px] border-b-[#2f8fe8]" />
        </div>
        <div className="w-[41px] bg-[#3a4354] flex items-center justify-center"><Snowflake size={20} color="#e0e0e0" /></div>
        <div className="flex-1 bg-[#3a4354]" />
      </div>
      <div className="h-[269px] shrink-0 mt-[2px] ml-[2px] bg-[#4b5a70] border-b-[2px] border-[#2b323e]">
        <div className="h-[38px] bg-[#8fa1b5] flex items-center pl-[27px] text-[22px] text-white">
          <Dot c="#dcdcdc" />
          <span className="ml-[19px]"><Sq /></span>
          <span className="ml-[17px]">0</span>
        </div>
      </div>
      <div className="h-[34px] flex items-center pl-[2px]">
        <div className="w-full h-[10px] rounded-l-full bg-[#8b929d]" />
      </div>
    </div>
    <div className="h-[48px] shrink-0 flex items-center pl-[28px] gap-[19px]">
      <svg viewBox="-20 -20 40 40" width="40" height="40" className="shrink-0">
        <path d="M-12,-7L-5,-14H14L7,-7ZM-14,-1H5L14,-8M-14,6H5L14,-2M-14,12H5L14,4" fill="none" stroke="#c8c8c8" strokeWidth="2" />
      </svg>
      <svg viewBox="-20 -20 40 40" width="40" height="40" className="shrink-0">
        <path d="M-13,-7L-6,-14H12L5,-7ZM-14,-1H3L10,-7M-14,6H-2" fill="none" stroke="#c8c8c8" strokeWidth="2" />
        <rect x="-1" y="0" width="18" height="14" fill="#efefef" stroke="#555" />
        <path d="M2,5H4M6,5H13M2,9H4M6,9H13" stroke="#333" strokeWidth="1.5" />
      </svg>
      <svg viewBox="-20 -20 40 40" width="40" height="40" className="shrink-0">
        <path d="M-13,-10H-4L-1,-7H13V-4H-9L-13,10ZM-7,-2H15L9,10H-12Z" fill={G} />
      </svg>
      <svg viewBox="-20 -20 40 40" width="40" height="40" className="shrink-0">
        <path d="M-13,-10H-4L-1,-7H13V-4H-9L-13,10ZM-7,-2H15L9,10H-12Z" fill={G} />
        <path d="M3,-2L-3,5H1L-1,9L6,2H2Z" fill="#3a4354" />
      </svg>
    </div>
    <div className="h-[40px] shrink-0 ml-[20px] bg-white rounded-l-[10px] flex items-center pl-[8px] whitespace-nowrap">
      <Search size={24} color="#222" strokeWidth={1.8} className="shrink-0" />
      <ChevronDown size={14} color="#222" strokeWidth={3} className="shrink-0" />
      <span className="ml-[9px] text-[25px] text-[#b8b8b8]">Search for layers</span>
    </div>
    <div className="h-[2px] shrink-0 mt-[18px] bg-[#272c36]" />
    <div className="h-[30px] shrink-0 ml-[20px] flex items-center text-[24px] text-[#e4e6e9]">Properties</div>
    <div className="h-[42px] shrink-0 mt-[16px] ml-[20px] bg-[#404a5c] border-[2px] border-r-0 border-[#38424f] rounded-l-[4px] flex items-center pl-[11px] text-[21.5px] text-[#7c8593]">
      Model Space
    </div>
    <div className="flex flex-col mt-[10px]">
      {props.map((p) => (
        <div key={p} className="h-[46px] flex items-center justify-end">
          <span className="text-[21.5px] text-[#d4d7da] whitespace-nowrap">{p}</span>
          <span className="ml-[18px] w-[9px] h-[40px] shrink-0 rounded-l-[4px] bg-[#404a5c] border-[2px] border-r-0 border-[#2e3c40]" />
        </div>
      ))}
    </div>
  </div>
);

const BottomBar = () => (
  <div className="h-[45px] shrink-0 flex gap-[2px] pl-[2px] border-b-[2px] border-[#272c36] bg-[#272c36] overflow-hidden">
    <div className={`w-[118px] shrink-0 bg-[#4a5a72] flex items-center justify-center text-[22px] font-semibold text-white ${tabFont}`}>Model</div>
    <div className="w-[44px] shrink-0 bg-[#3a4455] flex items-center justify-center">
      <svg viewBox="-12 -12 24 24" width="24" height="24"><P c={G} w="1.8" d="M-11,0H11M0,-11V11" /></svg>
    </div>
    <div className={`w-[116px] shrink-0 bg-[#333c4c] flex items-center justify-center text-[21px] text-[#a5a9b0] ${tabFont}`}>Layout1</div>
    <div className={`w-[116px] shrink-0 bg-[#333c4c] flex items-center justify-center text-[21px] text-[#a5a9b0] ${tabFont}`}>Layout2</div>
    <div className="flex-1 min-w-0 bg-[#3a4354] flex items-center">
      <div className="w-[2117px] shrink-0" />
      <div className="w-[2px] shrink-0 self-stretch bg-[#272c36]" />
      <span className="ml-[18px] w-[283px] shrink-0 text-[23.5px] text-[#a9adb3] whitespace-nowrap font-['Liberation_Sans',sans-serif]">-19.8419, -1.7528 , 0.0000</span>
      {statusIcons.map((s, i) => (
        <div key={i} className={`w-[44px] h-[44px] shrink-0 flex items-center justify-center ${i >= 8 ? "p-[2px]" : ""}`}>
          <div className={`w-[40px] h-[40px] flex items-center justify-center ${i >= 8 ? "bg-[#5b8bbf]" : ""}`}>
            <svg viewBox="-22 -22 44 44" width="44" height="44" className="shrink-0">{s}</svg>
          </div>
        </div>
      ))}
    </div>
  </div>
);

export default function App() {
  return (
    <div className="relative w-[3487px] h-[2115px] overflow-hidden bg-[linear-gradient(180deg,#0a1a2a_0%,#0d2233_60%,#15405f_100%)]">
      <div className="absolute left-[3px] top-[212px] w-[40px] h-[1728px] rounded-l-[20px] bg-[#23272e] border-l border-[#55595f]" />
      <div className="relative ml-[16px] mt-[5px] h-[2108px] flex flex-col rounded-tl-[22px] border-t border-[#9aa0a8] overflow-hidden">
        <div className="h-[117px] shrink-0 bg-[#3c4454] border-b-[3px] border-[#272c36] flex flex-col">
          <div className="h-[52px] flex items-center pl-[16px]">
            <div className="w-[24px] h-[24px] rounded-full bg-[#f55c56] flex items-center justify-center">
              <div className="w-[10px] h-[10px] rounded-full bg-[#7a0f0c]" />
            </div>
            <div className="ml-[16px] w-[24px] h-[24px] rounded-full bg-[#febc2e]" />
            <div className="ml-[16px] w-[24px] h-[24px] rounded-full bg-[#25c83f]" />
            <svg viewBox="0 0 30 32" width="30" height="32" className="ml-[1485px]">
              <path d="M0,0H21L30,9V32H0Z" fill="#375a86" />
              <path d="M0,18L30,32H0Z M0,18L30,18V32Z" fill="#a08040" />
              <path d="M21,0L30,9H21Z" fill="#c9d2dc" />
              <path d="M10,0V18M0,9H22" stroke="#8ba9c9" strokeWidth="1" />
              <rect x="7" y="6" width="6" height="6" fill="none" stroke="#8ba9c9" />
            </svg>
            <span className="ml-[8px] text-[27.5px] font-semibold text-[#b3b5ba] whitespace-pre font-['Liberation_Sans',sans-serif]">Autodesk AutoCAD 2024   helix.dwg</span>
          </div>
          <div className="flex-1 flex items-center pl-[737px] gap-[78px] -mt-[5px]">
            {topIcons.map((group, g) => (
              <div key={g} className="flex">
                {group.map((ic, i) => (
                  <div key={i} className="w-[66px] flex justify-center">
                    <svg viewBox="-28 -28 56 56" width="56" height="56">{ic}</svg>
                  </div>
                ))}
              </div>
            ))}
          </div>
        </div>
        <div className="flex-1 flex min-h-0 bg-[#272c36]">
          <Palette />
          <div className="flex-1 min-w-0 flex flex-col">
            <div className="flex-1 min-h-0 flex">
              <div className="flex-1 min-w-0 flex flex-col">
                <DocTabs />
                <Canvas />
              </div>
              <RightPanel />
            </div>
            <BottomBar />
          </div>
        </div>
        <svg width="0" height="0" className="absolute">
          <defs>
            <linearGradient id="gr" x1="0" y1="0" x2="0" y2="1">
              <stop offset="0" stopColor="#6db6ee" />
              <stop offset="1" stopColor="#555b66" />
            </linearGradient>
            <pattern id="chk" width="8" height="8" patternUnits="userSpaceOnUse">
              <rect width="8" height="8" fill="#555" />
              <rect width="4" height="4" fill="#ddd" />
              <rect x="4" y="4" width="4" height="4" fill="#ddd" />
            </pattern>
          </defs>
        </svg>
      </div>
    </div>
  );
}
